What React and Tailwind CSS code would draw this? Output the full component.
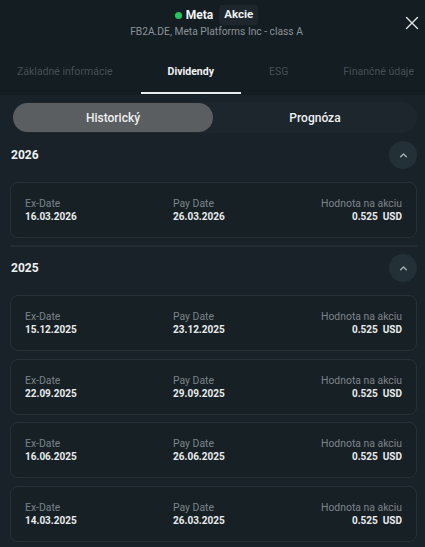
import React from "react";

const rows2025 = [
  ["15.12.2025", "23.12.2025"],
  ["22.09.2025", "29.09.2025"],
  ["16.06.2025", "26.06.2025"],
  ["14.03.2025", "26.03.2025"],
];

function Card({ ex, pay }) {
  return (
    <div className="flex h-[56px] items-center justify-between rounded-[8px] border border-[#263137] bg-[#172025] px-[14px]">
      <div className="flex flex-col leading-[13px]">
        <span className="text-[10.4px] text-[#7c8488]">Ex-Date</span>
        <span className="text-[10px] font-bold text-[#e9ebec]">{ex}</span>
      </div>
      <div className="flex flex-col leading-[13px]">
        <span className="text-[10.4px] text-[#7c8488]">Pay Date</span>
        <span className="text-[10px] font-bold text-[#e9ebec]">{pay}</span>
      </div>
      <div className="flex flex-col items-end leading-[13px]">
        <span className="text-[10.4px] text-[#7c8488]">Hodnota na akciu</span>
        <span className="text-[10px] font-bold text-[#e9ebec]">
          0.525&nbsp;&nbsp;USD
        </span>
      </div>
    </div>
  );
}

function YearHead({ year }) {
  return (
    <div className="flex h-[28px] items-center justify-between">
      <span className="pl-[1px] text-[12px] font-bold text-[#eef0f1]">{year}</span>
      <button className="flex h-[28px] w-[28px] items-center justify-center rounded-full bg-[#233037]">
        <svg width="11" height="11" viewBox="0 0 10 10" fill="none">
          <path d="M2.4 6.2 5 3.6l2.6 2.6" stroke="#aab1b4" strokeWidth="1.2" strokeLinecap="round" strokeLinejoin="round" />
        </svg>
      </button>
    </div>
  );
}

export default function App() {
  return (
    <div
      className="h-[547px] w-[425px] overflow-hidden bg-[#182228]"
      style={{ fontFamily: "Roboto, 'Noto Sans', sans-serif" }}
    >
      <div className="bg-[#141d22]">
        <div className="relative flex flex-col items-center pl-[8px] pt-[6px]">
          <div className="flex h-[18px] items-center">
            <span className="mr-[4px] h-[7px] w-[7px] rounded-full bg-[#22c55e]" />
            <span className="text-[12px] font-bold text-[#f1f3f4]">Meta</span>
            <span className="ml-[6px] rounded-[4px] bg-[#1d272d] px-[5px] py-[1px] text-[11.5px] font-bold text-[#eef0f1]">
              Akcie
            </span>
          </div>
          <div className="mt-[1px] text-[10.25px] leading-[14px] text-[#8b9296]">
            FB2A.DE, Meta Platforms Inc - class A
          </div>
          <button className="absolute right-[6px] top-[16px]">
            <svg width="14" height="14" viewBox="0 0 14 14" fill="none">
              <path d="M1.5 1.5l11 11M12.5 1.5l-11 11" stroke="#e5e7e8" strokeWidth="1.4" strokeLinecap="round" />
            </svg>
          </button>
        </div>
        <div className="mt-[26px] flex h-[30px] items-start gap-[55px] pl-[17px] text-[10.5px] leading-[14px] whitespace-nowrap">
          <span className="text-[#454f55]">Základné informácie</span>
          <span className="relative h-full font-bold text-[#f3f4f5]">
            Dividendy
            <span className="absolute -left-[27px] -right-[27px] bottom-[1px] h-[2px] bg-[#e8eef0]" />
          </span>
          <span className="text-[#454f55]">ESG</span>
          <span className="text-[#454f55]">Finančné údaje</span>
        </div>
      </div>

      <div className="pl-[10px] pr-[8px]">
        <div className="mt-[7px] ml-[2px] flex h-[31px] rounded-full bg-[#1c262c] p-[1px] pr-0">
          <div className="flex w-[200px] items-center justify-center rounded-full bg-[#5a5e61] text-[12px] font-medium text-[#eef0f1]">
            Historický
          </div>
          <div className="flex flex-1 items-center justify-center text-[12px] font-medium text-[#eef0f1]">
            Prognóza
          </div>
        </div>

        <div className="mt-[8px]">
          <YearHead year="2026" />
        </div>
        <div className="mt-[13px]">
          <Card ex="16.03.2026" pay="26.03.2026" />
        </div>
        <div className="mt-[7px] h-[2px] bg-[#222d33]" />
        <div className="mt-[7px]">
          <YearHead year="2025" />
        </div>
        <div className="mt-[13px] flex flex-col gap-[7.5px]">
          {rows2025.map(([ex, pay]) => (
            <Card key={ex} ex={ex} pay={pay} />
          ))}
        </div>
      </div>
    </div>
  );
}
